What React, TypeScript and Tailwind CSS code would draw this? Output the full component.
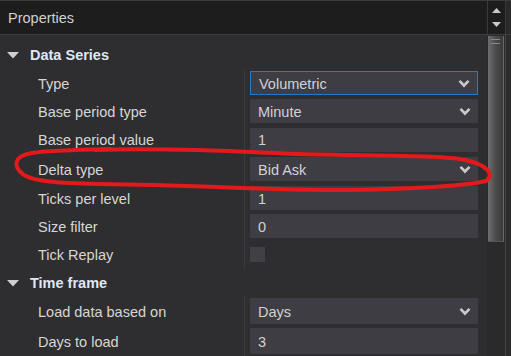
import React from "react";

const Chevron = () => (
  <svg width="12" height="9" viewBox="0 0 12 9" className="shrink-0">
    <path d="M1.5 1.8 L6 6.5 L10.5 1.8" fill="none" stroke="#c9c9c9" strokeWidth="2.6" strokeLinejoin="miter" />
  </svg>
);

const Caret = () => (
  <svg width="12" height="7" viewBox="0 0 12 7" className="shrink-0">
    <path d="M0 0 L12 0 L6 6.5 Z" fill="#cfcfcf" />
  </svg>
);

type Row = { label: string; value?: string; select?: boolean; focus?: boolean; check?: boolean; h: number; ih?: number };

const Field = ({ r }: { r: Row }) => {
  if (r.check) {
    return <div className="w-[15px] h-[15px] bg-[#404046]" />;
  }
  return (
    <div
      className={`w-[228px] flex items-center justify-between pl-[8px] pr-[7px] bg-[#3d3d43] ${
        r.focus ? "border border-[#1f7bd0] pl-[7px] pr-[6px]" : ""
      }`}
      style={{ height: r.ih ?? 24 }}
    >
      <span className="text-[14.5px] text-[#d2d2d2] leading-none pt-[2px]">{r.value}</span>
      {r.select && <Chevron />}
    </div>
  );
};

const Section = ({ title, rows, headH, pt }: { title: string; rows: Row[]; headH: number; pt: number }) => (
  <div className="flex flex-col">
    <div className="flex items-center pl-[7px] gap-[11px]" style={{ height: headH, paddingTop: pt }}>
      <Caret />
      <span className="text-[14.5px] font-bold text-[#dfe7f6]">{title}</span>
    </div>
    <div className="flex flex-col">
      {rows.map((r) => (
        <div key={r.label} className="flex" style={{ height: r.h }}>
          <div className="w-[244px] flex items-center pl-[38px] pt-[3px] text-[14.5px] text-[#d6d6d6]">{r.label}</div>
          <div className="flex items-center border-l border-[#3b3b3e] pl-[5px]">
            <Field r={r} />
          </div>
        </div>
      ))}
    </div>
  </div>
);

export default function App() {
  const s1: Row[] = [
    { label: "Type", value: "Volumetric", select: true, focus: true, h: 28 },
    { label: "Base period type", value: "Minute", select: true, h: 28 },
    { label: "Base period value", value: "1", h: 29 },
    { label: "Delta type", value: "Bid Ask", select: true, h: 30 },
    { label: "Ticks per level", value: "1", h: 28 },
    { label: "Size filter", value: "0", h: 28 },
    { label: "Tick Replay", check: true, h: 28 },
  ];
  const s2: Row[] = [
    { label: "Load data based on", value: "Days", select: true, h: 30, ih: 26 },
    { label: "Days to load", value: "3", h: 30, ih: 26 },
  ];
  return (
    <div
      className="relative w-[511px] h-[356px] overflow-hidden bg-[#2e2e30] flex flex-col"
      style={{ fontFamily: '"Liberation Sans", Arial, sans-serif' }}
    >
      {/* header */}
      <div className="flex h-[35px] shrink-0 border-t border-[#3a3a3a] border-b border-b-[#3c3c3e]">
        <div className="flex-1 bg-[#1d1d1d] flex items-center pl-[8px] pt-[3px] text-[14.5px] text-[#d0d0d0]">Properties</div>
        <div className="w-[18px] bg-[#1d1d1d] border-l border-[#3a3a3a] flex flex-col items-center justify-center gap-[9px]">
          <svg width="9" height="5" viewBox="0 0 9 5"><path d="M0 5 L4.5 0 L9 5 Z" fill="#cacaca" /></svg>
          <svg width="9" height="5" viewBox="0 0 9 5"><path d="M0 0 L4.5 5 L9 0 Z" fill="#cacaca" /></svg>
        </div>
        <div className="w-[6px] bg-[#2a2a2a] border-l border-[#3a3a3a]" />
      </div>
      {/* body */}
      <div className="flex flex-1 min-h-0">
        <div className="flex-1 flex flex-col">
          <Section title="Data Series" headH={34} pt={7} rows={s1} />
          <Section title="Time frame" headH={28} pt={3} rows={s2} />
        </div>
        <div className="w-[18px] bg-[#2a2a2b] pt-[1px] flex flex-col items-center">
          <div className="relative w-[16px] h-[206px] bg-gradient-to-r from-[#6e6e6e] via-[#4c4c4c] to-[#3a3a3a] border-r border-[#6a6a6a] border-b border-b-[#555]">
            <div className="absolute left-[3px] right-[3px] top-[3px] h-[1px] bg-[#8a8a8a]" />
            <div className="absolute left-[3px] right-[3px] top-[7px] h-[1px] bg-[#8a8a8a]" />
          </div>
        </div>
        <div className="w-[6px] bg-[#2b2b2b] border-l border-[#444]" />
      </div>
      {/* red annotation */}
      <svg className="absolute inset-0 pointer-events-none" width="511" height="356" viewBox="0 0 511 356">
        <path
          d="M 95 150 C 180 147, 260 153, 300 154 C 380 156, 440 155, 465 160 C 485 164, 496 174, 486 181 C 460 187, 400 189, 350 190 C 260 190, 200 185, 100 184 C 60 183, 35 182, 24 175 C 12 166, 14 156, 32 153 C 55 150, 80 150, 110 149"
          fill="none"
          stroke="#e3191b"
          strokeWidth="4"
          strokeLinecap="round"
          strokeLinejoin="round"
        />
      </svg>
    </div>
  );
}
